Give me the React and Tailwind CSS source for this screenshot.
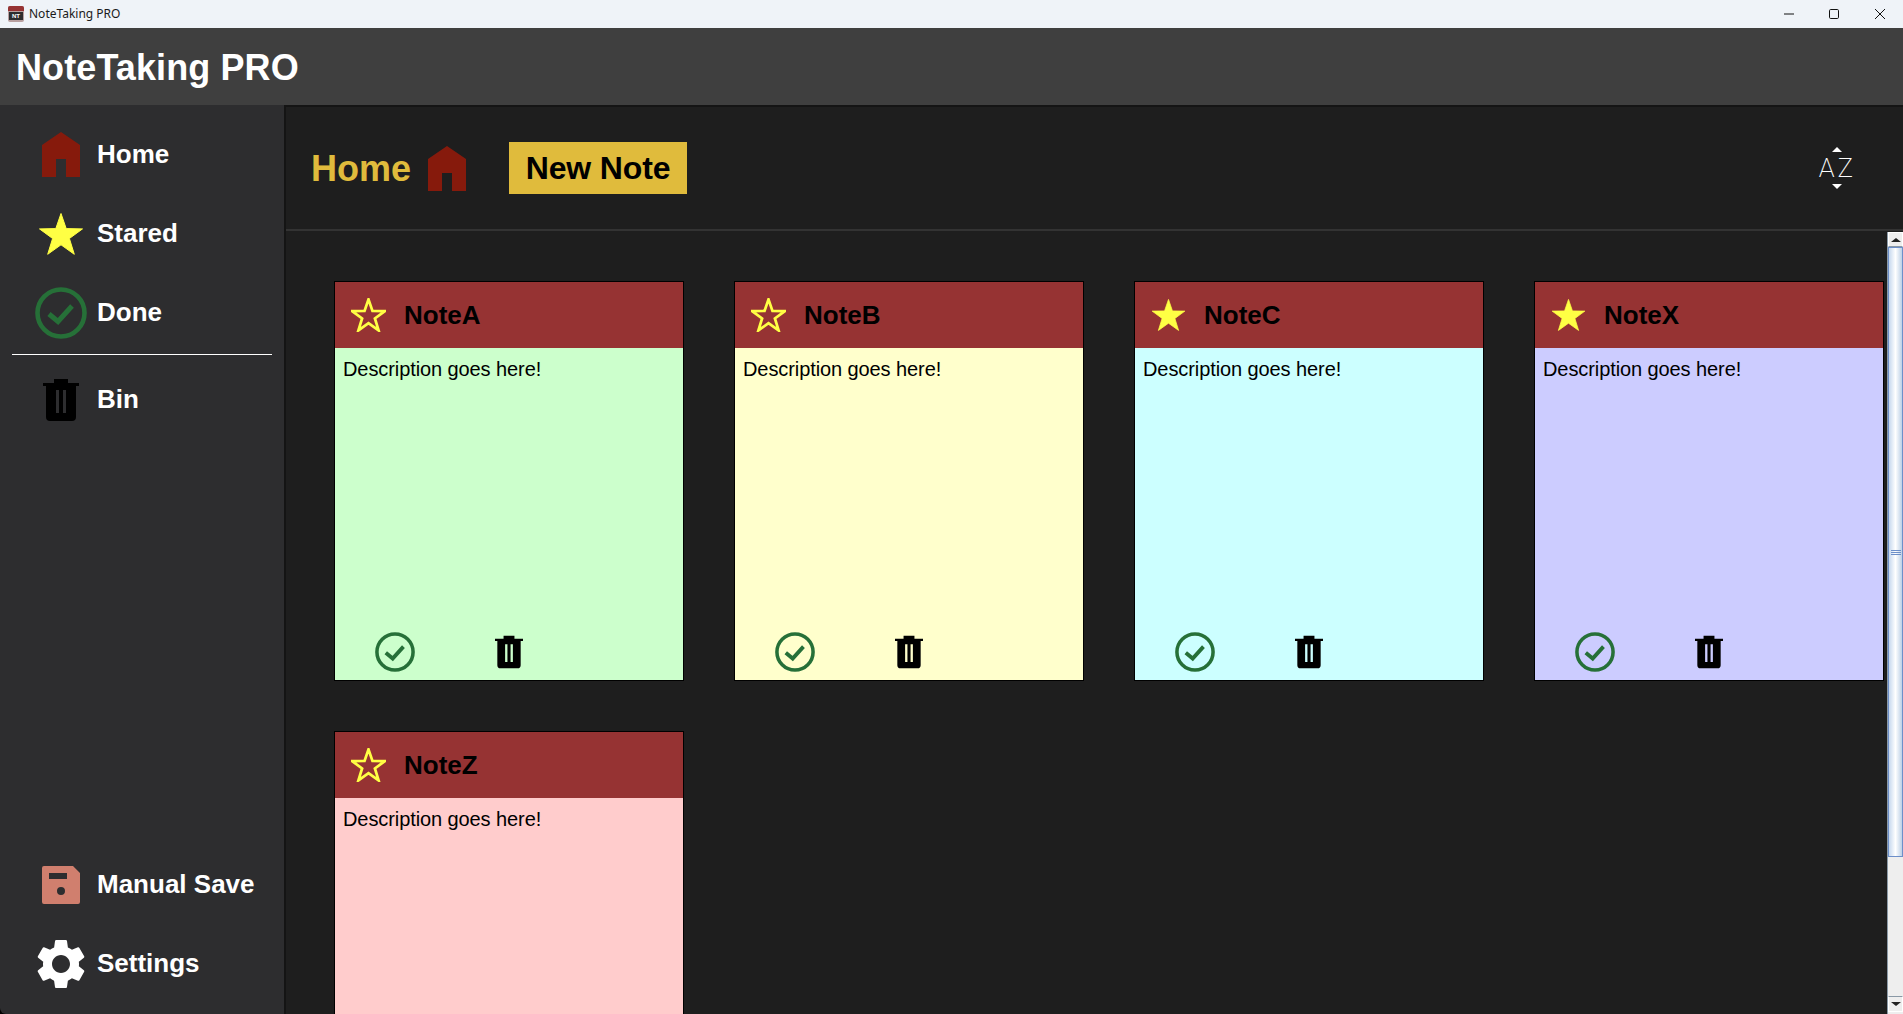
import React from 'react';

const font = 'font-["Liberation_Sans",Arial,sans-serif]';

const HomeIcon = ({ className }) => (
  <svg viewBox="0 0 38 45" className={className}>
    <path fill="#861a0c" d="M0 13 19 0 38 13V45H24V27H14V45H0Z" />
  </svg>
);

const Star = ({ filled, className }) => (
  <svg viewBox="0 0 46 44" className={className}>
    <path
      d="M23 1.5 28.2 16.6 44.5 16.9 31.4 26.5 36.3 42.3 23 32.8 9.7 42.3 14.6 26.5 1.5 16.9 17.8 16.6Z"
      fill={filled ? '#ffff44' : 'none'}
      stroke="#ffff44"
      strokeWidth={filled ? 1 : 3.6}
    />
  </svg>
);

const Check = ({ className }) => (
  <svg viewBox="0 0 52 52" className={className}>
    <circle cx="26" cy="26" r="23.5" fill="none" stroke="#267038" strokeWidth="4.6" />
    <path d="M14 27 23 34.5 37 19" fill="none" stroke="#267038" strokeWidth="5" />
  </svg>
);

const Bin = ({ className }) => (
  <svg viewBox="0 0 36 42" className={className}>
    <path
      fill="#000"
      fillRule="evenodd"
      d="M11 0H25V4H36V7H33V38Q33 42 29 42H7Q3 42 3 38V7H0V4H11ZM13 11V34H16V11ZM20 11V34H23V11Z"
    />
  </svg>
);

const SaveIcon = ({ className }) => (
  <svg viewBox="0 0 38 38" className={className}>
    <path
      fill="#d07f6e"
      fillRule="evenodd"
      d="M2 0H31L38 7V36Q38 38 36 38H2Q0 38 0 36V2Q0 0 2 0ZM7 7V13H25V7ZM19 21A4 4 0 1 0 19 29 4 4 0 1 0 19 21Z"
    />
  </svg>
);

const Gear = ({ className }) => (
  <svg viewBox="0 0 24 24" className={className}>
    <path
      fill="#fff"
      d="M19.14 12.94c.04-.3.06-.61.06-.94 0-.32-.02-.64-.07-.94l2.03-1.58a.49.49 0 0 0 .12-.61l-1.92-3.32a.488.488 0 0 0-.59-.22l-2.39.96c-.5-.38-1.03-.7-1.62-.94l-.36-2.54a.484.484 0 0 0-.48-.41h-3.84c-.24 0-.43.17-.47.41l-.36 2.54c-.59.24-1.13.57-1.62.94l-2.39-.96c-.22-.08-.47 0-.59.22L2.74 8.87c-.12.21-.08.47.12.61l2.03 1.58c-.05.3-.09.63-.09.94s.02.64.07.94l-2.03 1.58a.49.49 0 0 0-.12.61l1.92 3.32c.12.22.37.29.59.22l2.39-.96c.5.38 1.03.7 1.62.94l.36 2.54c.05.24.24.41.48.41h3.84c.24 0 .44-.17.47-.41l.36-2.54c.59-.24 1.13-.56 1.62-.94l2.39.96c.22.08.47 0 .59-.22l1.92-3.32c.12-.22.07-.47-.12-.61l-2.01-1.58zM12 15.6c-1.98 0-3.6-1.62-3.6-3.6s1.62-3.6 3.6-3.6 3.6 1.62 3.6 3.6-1.62 3.6-3.6 3.6z"
    />
  </svg>
);

function NavItem({ icon, label }) {
  return (
    <div className="flex items-center h-[79px]">
      <div className="w-[97px] flex justify-center pl-[25px] shrink-0">{icon}</div>
      <span className="text-[26px] font-bold text-white leading-none pb-[2px]">{label}</span>
    </div>
  );
}

function NoteCard({ title, color, starred }) {
  return (
    <div className={`w-[350px] h-[400px] border border-black flex flex-col ${color}`}>
      <div className="h-[66px] bg-[#963333] flex items-center pl-[16px] shrink-0">
        <Star filled={starred} className="w-[35px] h-[34px]" />
        <span className="ml-[18px] text-[26px] font-bold text-black leading-none">{title}</span>
      </div>
      <div className="pl-[8px] pt-[10px] text-[20px] leading-[23px] tracking-[-0.09px] text-black">Description goes here!</div>
      <div className="mt-auto flex items-center pl-[40px] pb-[8px]">
        <Check className="w-[40px] h-[40px]" />
        <Bin className="ml-[80px] w-[28px] h-[34px]" />
      </div>
    </div>
  );
}

function Scrollbar() {
  return (
    <div className="w-[16px] shrink-0 bg-[#eeeeee] flex flex-col border-l border-[#8a99a6] mt-[1px]">
      <div className="h-[15px] border border-white border-b-[#8a99a6] flex items-center justify-center shrink-0">
        <div className="w-0 h-0 border-x-[5px] border-x-transparent border-b-[4px] border-b-[#222]" />
      </div>
      <div className="h-[610px] shrink-0 border-y border-x border-[#6d8fc9] bg-gradient-to-r from-[#c6d8ee] via-white to-[#bcd0e6] flex items-center justify-center">
        <div className="flex flex-col gap-[1px]">
          <div className="w-[10px] h-[1px] bg-[#6d8fc9]" />
          <div className="w-[10px] h-[1px] bg-[#6d8fc9]" />
          <div className="w-[10px] h-[1px] bg-[#6d8fc9]" />
        </div>
      </div>
      <div className="flex-1" />
      <div className="h-[16px] mb-[2px] border border-white border-t-[#8a99a6] flex items-center justify-center shrink-0">
        <div className="w-0 h-0 border-x-[5px] border-x-transparent border-t-[4px] border-t-[#222]" />
      </div>
    </div>
  );
}

export default function App() {
  return (
    <div className={`h-screen flex flex-col overflow-hidden bg-black ${font}`}>
      {/* window title bar */}
      <div className="h-[28px] shrink-0 bg-[#eff3f8] flex items-center pl-[8px]">
        <div className="w-[16px] h-[16px] rounded-[2px] bg-[#b8a0a0] overflow-hidden flex flex-col shrink-0">
          <div className="h-[5px] bg-[#963333]" />
          <div className="mx-[1px] mt-[1px] h-[8px] bg-[#2d2d2f] text-white text-[6px] leading-[8px] font-bold text-center">NT</div>
        </div>
        <span className='ml-[5px] text-[12px] text-[#1a1a1a] font-["Noto_Sans",sans-serif]'>NoteTaking PRO</span>
        <div className="ml-auto flex items-center">
          <svg viewBox="0 0 10 10" className="w-[10px] h-[10px] mr-[35px]">
            <path d="M0 5H10" stroke="#111" strokeWidth="1" />
          </svg>
          <svg viewBox="0 0 10 10" className="w-[10px] h-[10px] mr-[36px]">
            <rect x="0.5" y="0.5" width="9" height="9" rx="1.2" fill="none" stroke="#111" strokeWidth="1" />
          </svg>
          <svg viewBox="0 0 10 10" className="w-[10px] h-[10px] mr-[18px]">
            <path d="M0 0 10 10M10 0 0 10" stroke="#111" strokeWidth="1" />
          </svg>
        </div>
      </div>

      {/* app header */}
      <div className="h-[77px] shrink-0 bg-[#3f3f3f] flex items-center pl-[16px] pt-[2px]">
        <span className="text-[36px] font-bold text-white leading-none tracking-[0.1px]">NoteTaking PRO</span>
      </div>

      <div className="flex-1 flex min-h-0">
        {/* sidebar */}
        <div className="w-[284px] shrink-0 bg-[#2d2d2f] rounded-bl-[6px] flex flex-col pt-[10px] pb-[11px]">
          <NavItem icon={<HomeIcon className="w-[38px] h-[45px]" />} label="Home" />
          <NavItem icon={<Star filled className="w-[46px] h-[44px]" />} label="Stared" />
          <NavItem icon={<Check className="w-[52px] h-[52px]" />} label="Done" />
          <div className="h-[1px] bg-white mx-[12px] mt-[2px]" />
          <div className="mt-[5px]">
            <NavItem icon={<Bin className="w-[36px] h-[42px]" />} label="Bin" />
          </div>
          <div className="mt-auto">
            <NavItem icon={<SaveIcon className="w-[38px] h-[38px]" />} label="Manual Save" />
            <NavItem icon={<Gear className="w-[60px] h-[60px] shrink-0" />} label="Settings" />
          </div>
        </div>

        {/* main panel */}
        <div className="flex-1 min-w-0 flex flex-col bg-[#1e1e1e] border-l-2 border-t-2 border-[#141414]">
          <div className="h-[124px] shrink-0 border-b-2 border-[#333333] flex items-center pl-[25px] pr-[47px]">
            <span className="text-[36px] font-bold text-[#e0bb3c] leading-none pt-[2px]">Home</span>
            <HomeIcon className="ml-[17px] w-[38px] h-[45px]" />
            <button className="ml-[43px] w-[178px] h-[52px] bg-[#e0bb3c] text-[32px] font-bold text-black leading-none tracking-[-0.15px]">
              New Note
            </button>
            <div className="ml-auto flex flex-col items-center text-white">
              <div className="w-0 h-0 border-x-[5px] border-x-transparent border-b-[5px] border-b-white" />
              <span className='my-[2px] text-[26px] leading-[28px] tracking-[3px] font-extralight font-["Roboto",sans-serif]'>AZ</span>
              <div className="w-0 h-0 border-x-[5px] border-x-transparent border-t-[5px] border-t-white" />
            </div>
          </div>

          <div className="flex-1 min-h-0 flex overflow-hidden">
            <div className="flex-1 min-w-0 pt-[50px] pl-[48px] grid grid-cols-[repeat(4,350px)] auto-rows-[400px] gap-[50px] overflow-hidden">
              <NoteCard title="NoteA" color="bg-[#ccffcc]" />
              <NoteCard title="NoteB" color="bg-[#ffffcc]" />
              <NoteCard title="NoteC" color="bg-[#ccffff]" starred />
              <NoteCard title="NoteX" color="bg-[#ccccff]" starred />
              <NoteCard title="NoteZ" color="bg-[#ffcccc]" />
            </div>
            <Scrollbar />
          </div>
        </div>
      </div>
    </div>
  );
}
